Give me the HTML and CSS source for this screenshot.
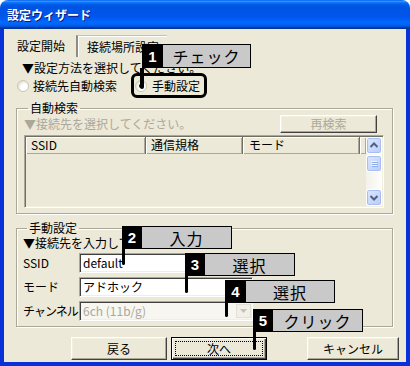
FILE: index.html
```html
<!DOCTYPE html>
<html lang="ja">
<head>
<meta charset="utf-8">
<title>設定ウィザード</title>
<link rel="stylesheet" href="styles.css">
</head>
<body>
<div class="window">
  <div class="titlebar"><span class="title">設定ウィザード</span></div>
  <div class="client">
    <div class="tabs">
      <div class="tab">設定開始</div>
      <div class="tab active">接続場所設定</div>
    </div>
    <div class="intro">▼設定方法を選択してください。</div>
    <div class="radios">
      <label class="radio"><span class="dot"></span>接続先自動検索</label>
      <label class="radio highlight"><span class="dot checked"></span>手動設定</label>
    </div>
    <fieldset class="group auto">
      <legend>自動検索</legend>
      <div class="auto-head">
        <span class="disabled">▼接続先を選択してください。</span>
        <button class="btn small" disabled>再検索</button>
      </div>
      <div class="listview">
        <div class="lv-main">
          <div class="lv-header">
            <span class="col c1">SSID</span><span class="col c2">通信規格</span><span class="col c3">モード</span><span class="col c4"></span>
          </div>
        </div>
        <div class="scrollbar">
          <span class="sb-btn"><svg width="14" height="15" viewBox="0 0 14 15"><polyline points="3.5,9 7,5.5 10.5,9" fill="none" stroke="#4D6185" stroke-width="2"/></svg></span>
          <span class="sb-thumb"><svg width="14" height="15" viewBox="0 0 14 15"><g stroke="#F0F5FF" stroke-width="1"><line x1="4" y1="5.5" x2="10" y2="5.5"/><line x1="4" y1="7.5" x2="10" y2="7.5"/><line x1="4" y1="9.5" x2="10" y2="9.5"/></g><g stroke="#8EADEE" stroke-width="1"><line x1="5" y1="6.5" x2="11" y2="6.5"/><line x1="5" y1="8.5" x2="11" y2="8.5"/><line x1="5" y1="10.5" x2="11" y2="10.5"/></g></svg></span>
          <span class="sb-track"></span>
          <span class="sb-btn"><svg width="14" height="15" viewBox="0 0 14 15"><polyline points="3.5,6 7,9.5 10.5,6" fill="none" stroke="#4D6185" stroke-width="2"/></svg></span>
        </div>
      </div>
    </fieldset>
    <fieldset class="group manual">
      <legend>手動設定</legend>
      <div class="intro2">▼接続先を入力してください。</div>
      <div class="form">
        <div class="row"><span class="lbl">SSID</span><div class="field">default</div></div>
        <div class="row"><span class="lbl">モード</span><div class="field">アドホック</div></div>
        <div class="row"><span class="lbl tight">チャンネル</span><div class="field select off"><span>6ch (11b/g)</span><span class="arrow"><svg width="9" height="5" viewBox="0 0 9 5"><polygon points="1,0 8,0 4.5,4" fill="#C4C2B8"/></svg></span></div></div>
      </div>
    </fieldset>
    <div class="buttons">
      <button class="btn">戻る</button>
      <button class="btn default"><span class="focus">次へ</span></button>
      <button class="btn cancel">キャンセル</button>
    </div>
  </div>

  <div class="callout co1"><span class="num">1</span><span class="tag">チェック</span><span class="stem"></span></div>
  <div class="callout co2"><span class="num">2</span><span class="tag">入力</span><span class="stem"></span></div>
  <div class="callout co3"><span class="num">3</span><span class="tag">選択</span><span class="stem"></span></div>
  <div class="callout co4"><span class="num">4</span><span class="tag">選択</span><span class="stem"></span></div>
  <div class="callout co5"><span class="num">5</span><span class="tag">クリック</span><span class="stem"></span></div>
</div>
</body>
</html>
```
FILE: styles.css
```css
html { background: #fff; }
body {
  margin: 0;
  font-family: "Noto Sans CJK JP", "Liberation Sans", sans-serif;
  font-size: 12px;
  color: #000;
}
.window {
  position: relative;
  width: 410px;
  height: 366px;
  display: flex;
  flex-direction: column;
  border-radius: 8px 8px 0 0;
  overflow: hidden;
}
.titlebar {
  height: 29px;
  flex: none;
  display: flex;
  align-items: center;
  padding-left: 7px;
  background: linear-gradient(#0058EE 0%, #3593FF 4%, #288EFF 6%, #127DFF 8%, #036FFC 10%, #0262EE 14%, #0057E5 20%, #0054E3 24%, #0055EB 56%, #005BF5 66%, #026AFE 76%, #0062EF 86%, #0052D6 92%, #0040AB 94%, #003092 100%);
}
.title {
  color: #fff;
  font-weight: bold;
  font-size: 12px;
  line-height: 14px;
  text-shadow: 1px 1px 0 #0A1883;
  margin-top: 1px;
}
.client {
  flex: 1;
  background: #ECE9D8;
  border: 4px solid #0831D9;
  border-top: 0;
  display: flex;
  flex-direction: column;
}
.tabs {
  display: flex;
  margin-top: 6px;
  padding-left: 13px;
  height: 22px;
}
.tab {
  line-height: 22px;
  width: 59px;
}
.tab.active {
  width: 80px;
  padding-left: 9px;
  line-height: 21px;
  border-left: 2px solid #8F8C7E;
  border-top: 1px solid #C5C2B2;
  box-shadow: inset 1px 1px 0 #fff;
}
.intro {
  margin: 4px 0 0 18px;
  line-height: 14px;
}
.radios {
  display: flex;
  align-items: center;
  height: 25px;
  margin-top: -2px;
}
.radio {
  display: flex;
  align-items: center;
  line-height: 14px;
}
.radio:first-child { margin-left: 13px; }
.dot {
  width: 12px;
  height: 12px;
  border-radius: 50%;
  box-sizing: border-box;
  border: 1px solid #C9C6B6;
  background: radial-gradient(circle at 65% 65%, #fff 35%, #E4E2D6 75%, #CFCDC0 100%);
  margin-right: 4px;
  position: relative;
}
.dot.checked::after {
  content: "";
  position: absolute;
  left: 3px;
  top: 3px;
  width: 4px;
  height: 4px;
  border-radius: 50%;
  background: #000;
}
.radio.highlight {
  margin-left: 14px;
  border: 3px solid #000;
  border-radius: 6px;
  height: 25px;
  box-sizing: border-box;
  padding: 0 4px 0 1px;
}
.radio.highlight .dot { margin-right: 5px; }

.group {
  margin: 3px 13px 0 12px;
  padding: 0 8px 5px 7px;
  border: 1px solid #ACA899;
  box-shadow: 1px 1px 0 #fff, inset 1px 1px 0 #fff;
  min-width: 0;
}
.group legend {
  margin-left: 4px;
  padding: 0 2px;
  line-height: 14px;
}
.auto-head {
  display: flex;
  justify-content: space-between;
  align-items: center;
  height: 18px;
}
.disabled { color: #ACA899; line-height: 14px; }
.btn {
  font-family: inherit;
  font-size: 12px;
  color: #000;
  background: #ECE9D8;
  border: 1px solid;
  border-color: #fff #404040 #404040 #fff;
  box-shadow: inset -1px -1px 0 #ACA899, inset 1px 1px 0 #F1EFE2;
  padding: 0;
  height: 23px;
  width: 96px;
  line-height: 14px;
}
.btn.small {
  width: 97px;
  height: 18px;
  margin-right: 7px;
  color: #ACA899;
}
.listview {
  margin-top: 2px;
  height: 73px;
  box-sizing: border-box;
  padding: 1px;
  border: 1px solid;
  border-color: #ACA899 #fff #fff #ACA899;
  box-shadow: inset 1px 1px 0 #716F64, inset -1px -1px 0 #F1EFE2;
  display: flex;
}
.lv-main { flex: 1; }
.lv-header { display: flex; height: 17px; }
.col {
  box-sizing: border-box;
  height: 17px;
  line-height: 15px;
  padding-left: 5px;
  border-right: 1px solid #716F64;
  box-shadow: inset 1px 1px 0 #fff, inset -1px -1px 0 #ACA899;
}
.c1 { width: 120px; }
.c2 { width: 97px; }
.c3 { width: 117px; padding-left: 6px; }
.c4 { flex: 1; border-right: 0; }
.scrollbar {
  width: 16px;
  display: flex;
  flex-direction: column;
  background: linear-gradient(90deg, #F3F1EA, #FEFEFB);
}
.sb-btn, .sb-thumb {
  height: 17px;
  box-sizing: border-box;
  border: 1px solid #fff;
  border-radius: 3px;
  background: linear-gradient(135deg, #DCE6FD, #BACCF8);
  box-shadow: inset 0 0 0 1px #A6BEF5;
  display: flex;
  align-items: center;
  justify-content: center;
}
.sb-thumb { margin-top: 1px; }
.sb-track { flex: 1; }

.manual { margin-top: 7px; padding-left: 6px; }
.intro2 { line-height: 15px; }
.form {
  margin-top: 3px;
  display: flex;
  flex-direction: column;
  gap: 4px;
}
.row { display: flex; align-items: center; height: 20px; }
.lbl { width: 56px; flex: none; line-height: 14px; white-space: nowrap; }
.lbl.tight { letter-spacing: -1px; }
.field {
  width: 174px;
  height: 20px;
  box-sizing: border-box;
  background: #fff;
  border: 1px solid;
  border-color: #ACA899 #fff #fff #ACA899;
  box-shadow: inset 1px 1px 0 #404040, inset -1px -1px 0 #F1EFE2;
  padding-left: 3px;
  line-height: 18px;
  display: flex;
  align-items: center;
}
.field.off {
  background: #F7F6F1;
  color: #ACA899;
  justify-content: space-between;
  padding-right: 1px;
}
.arrow {
  width: 15px;
  height: 14px;
  box-sizing: border-box;
  border: 1px solid #E2E0D6;
  background: #F1EFE6;
  display: flex;
  align-items: center;
  justify-content: center;
}
.buttons {
  display: flex;
  gap: 4px;
  margin-top: 10px;
  padding-left: 67px;
}
.btn.default {
  border: 1px solid #000;
  box-shadow: inset 1px 1px 0 #fff, inset -1px -1px 0 #404040, inset -2px -2px 0 #ACA899;
  padding: 3px;
}
.focus {
  display: flex;
  align-items: center;
  justify-content: center;
  height: 100%;
  box-sizing: border-box;
  border: 1px dotted #000;
}
.btn.cancel { width: 92px; margin-left: 36px; }

.callout {
  position: absolute;
  display: flex;
  height: 23px;
}
.callout .num {
  width: 20px;
  background: #000;
  color: #fff;
  font-family: "Liberation Sans", sans-serif;
  font-weight: bold;
  font-size: 15px;
  display: flex;
  align-items: center;
  justify-content: center;
}
.callout .tag {
  width: 89px;
  box-sizing: border-box;
  background: #C9C9C9;
  border: 1px solid #000;
  border-left: 0;
  font-size: 16px;
  letter-spacing: 1px;
  display: flex;
  align-items: center;
  justify-content: center;
}
.callout .stem {
  position: absolute;
  left: 0;
  top: 100%;
  width: 3px;
  background: #000;
  border-radius: 0 0 2px 2px;
}
.co1 { left: 142px; top: 44px; height: 24px; }
.co1 .num { width: 21px; }
.co1 .tag { width: 88px; }
.co1 .stem { left: -2px; width: 4px; height: 21px; }
.co2 { left: 122px; top: 226px; }
.co2 .tag { width: 90px; }
.co2 .stem { height: 16px; }
.co3 { left: 185px; top: 253px; }
.co3 .tag { width: 90px; }
.co3 .stem { height: 17px; }
.co4 { left: 225px; top: 280px; }
.co4 .num { width: 21px; }
.co4 .stem { height: 14px; }
.co5 { left: 253px; top: 309px; }
.co5 .tag { width: 90px; }
.co5 .stem { height: 18px; }
```
